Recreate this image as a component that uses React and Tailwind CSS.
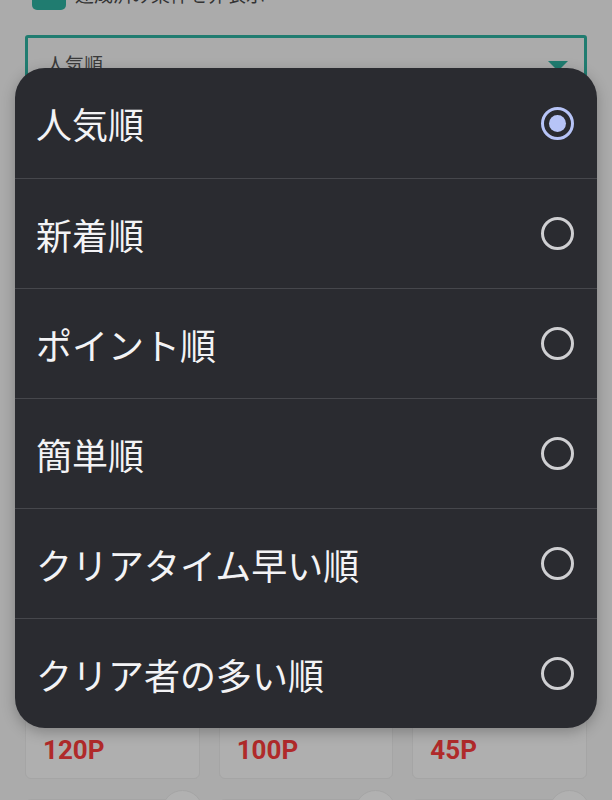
import React, { useState } from 'react';

const options = ['人気順', '新着順', 'ポイント順', '簡単順', 'クリアタイム早い順', 'クリア者の多い順'];

const cards = ['120P', '100P', '45P'];

// --- Radio mark ---
const Radio = ({ checked }) => (
    <span
        className={`w-[33px] h-[33px] rounded-full border-[3px] flex items-center justify-center ${checked ? 'border-[#b7c4f7]' : 'border-[#cfcfd2]'}`}
    >
        {checked && <span className="w-[17px] h-[17px] rounded-full bg-[#b7c4f7]" />}
    </span>
);

const App = () => {
    const [selected, setSelected] = useState(0);

    return (
        <div
            className="relative w-[612px] h-[800px] overflow-hidden bg-[#ababab]"
            style={{ fontFamily: '"Noto Sans CJK JP", "Noto Sans", Roboto, sans-serif' }}
        >
            {/* Page behind the dialog (dimmed) */}
            <div className="px-[25px]">
                <div className="-mt-[24px] h-[34px] flex items-center gap-[9px] pl-[7px]">
                    <span className="w-[34px] h-[34px] rounded-[5px] bg-[#207c70] flex items-center justify-center">
                        <svg width="20" height="20" viewBox="0 0 24 24" fill="none" stroke="#b5b5b5" strokeWidth="3">
                            <path d="M5 12 L10 17 L19 7" />
                        </svg>
                    </span>
                    <span className="text-[19px] leading-none text-[#333]">達成済み条件を非表示</span>
                </div>
                <div className="mt-[25px] h-[58px] border-[3px] border-[#207c70] rounded-[3px] flex items-center justify-between pl-[18px] pr-[16px]">
                    <span className="text-[19px] text-[#3a3a3a]">人気順</span>
                    <svg width="20" height="10" viewBox="0 0 20 10" className="mt-[4px]">
                        <path d="M0 0 L20 0 L10 10 Z" fill="#207c70" />
                    </svg>
                </div>
                <div className="mt-[606px] grid grid-cols-3 gap-x-[19px] gap-y-[20px]">
                    {cards.map((c) => (
                        <div key={c} className="h-[80px] rounded-[6px] bg-[#afafaf] border border-[#a5a5a5] flex items-end px-[17px] pb-[15px]">
                            <span className="text-[26px] leading-none font-bold text-[#b02a2a]" style={{ fontFamily: 'Roboto, sans-serif' }}>{c}</span>
                        </div>
                    ))}
                    {cards.map((c) => (
                        <div key={c + 'b'} className="relative h-[60px] rounded-[6px] bg-[#afafaf] border border-[#a5a5a5]">
                            <span className="absolute -top-[10px] -right-[4px] w-[41px] h-[41px] rounded-full bg-[#b1b1b1] border border-[#a5a5a5]" />
                        </div>
                    ))}
                </div>
            </div>

            {/* Sort dialog */}
            <div className="absolute left-[15px] top-[68px] w-[582px] rounded-[30px] bg-[#2a2b30] overflow-hidden shadow-[0_4px_14px_rgba(0,0,0,0.25)]">
                {options.map((opt, i) => (
                    <button
                        key={opt}
                        onClick={() => setSelected(i)}
                        className={`w-full h-[110px] flex items-center justify-between pl-[21px] pr-[23px] text-left ${i > 0 ? 'border-t border-[#46474c]' : ''}`}
                    >
                        <span className="text-[36px] text-[#f3f3f5] leading-none">{opt}</span>
                        <Radio checked={selected === i} />
                    </button>
                ))}
            </div>
        </div>
    );
};

export default App;
